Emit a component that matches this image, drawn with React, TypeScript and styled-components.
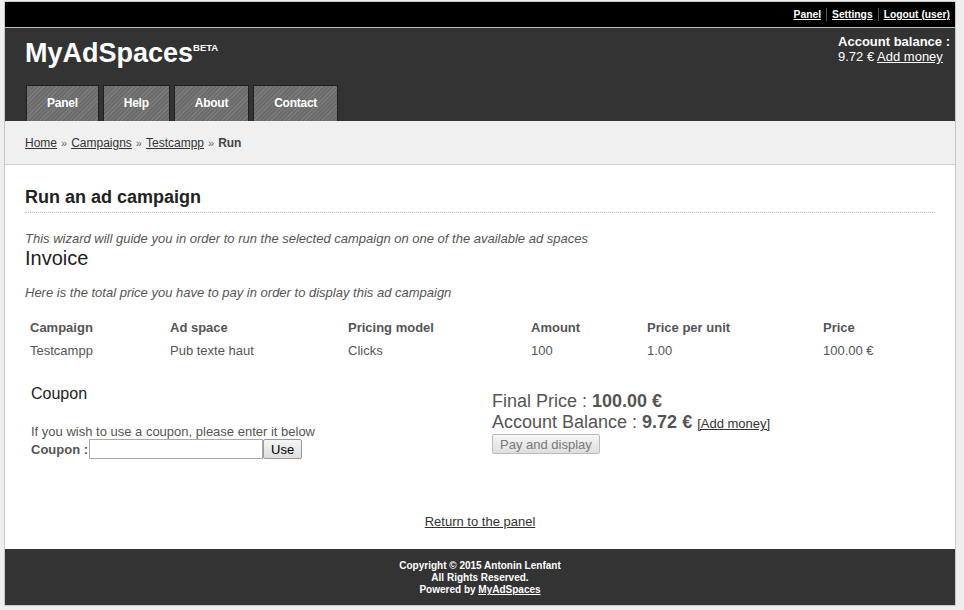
import React from "react";
import styled, { createGlobalStyle } from "styled-components";

const Global = createGlobalStyle`
  html, body { margin: 0; padding: 0; background: #eeeeee; }
  body { font-family: "Liberation Sans", Arial, sans-serif; color: #555; }
`;

const Page = styled.div`
  width: 950px;
  margin: 1px 0 0 4px;
  border: 1px solid #c8c8c8;
  background: #fff;
`;

const TopBar = styled.div`
  background: #000;
  height: 25px;
  border-bottom: 1px solid #bbb;
  display: flex;
  justify-content: flex-end;
  align-items: center;
  padding-right: 5px;
`;

const TopLink = styled.a`
  color: #fff;
  font-size: 10.3px;
  font-weight: bold;
  text-decoration: underline;
  padding: 0 5px;
  line-height: 13px;
  border-left: 1px solid #555;
  &:first-child { border-left: none; }
  &:last-child { padding-right: 0; }
`;

const Header = styled.div`
  background: #333;
  height: 93px;
  padding: 0 5px 0 20px;
  display: flex;
  flex-direction: column;
`;

const HeaderRow = styled.div`
  display: flex;
  justify-content: space-between;
  height: 57px;
`;

const Logo = styled.div`
  color: #fff;
  font-size: 27px;
  font-weight: bold;
  padding-top: 10px;
  sup {
    font-size: 9.5px;
    vertical-align: top;
    position: relative;
    top: 4px;
  }
`;

const Balance = styled.div`
  color: #fff;
  font-size: 13px;
  line-height: 15px;
  padding-top: 6px;
  b { font-weight: bold; }
  a { color: #fff; text-decoration: underline; }
`;

const Nav = styled.div`
  display: flex;
  gap: 4px;
  margin-top: auto;
  padding-left: 1px;
`;

const Tab = styled.a`
  display: flex;
  align-items: center;
  justify-content: center;
  padding: 0 20px 1px;
  box-sizing: border-box;
  height: 36px;
  border: 1px solid #1f1f1f;
  border-bottom: none;
  background: repeating-linear-gradient(135deg, #7b7b7b 0 1px, #6c6c6c 1px 3px);
  color: #fff;
  font-size: 12px;
  font-weight: bold;
  letter-spacing: -0.25px;
  text-decoration: none;
`;

const Crumbs = styled.div`
  background: #f0f0f0;
  border-bottom: 1px solid #cfcfcf;
  height: 43px;
  padding: 0 20px;
  display: flex;
  align-items: center;
  font-size: 12px;
  color: #333;
  a { color: #333; text-decoration: underline; }
  span.sep { color: #666; margin: 0 4px; font-size: 11px; }
  b { color: #444; }
`;

const Content = styled.div`
  padding: 22px 20px 0 20px;
`;

const Title = styled.h1`
  margin: 0;
  font-size: 18px;
  font-weight: bold;
  color: #222;
  padding-bottom: 4px;
  border-bottom: 1px dotted #bbb;
`;

const Intro = styled.p<{ $top: number }>`
  margin: ${(p) => p.$top}px 0 0 0;
  font-size: 13px;
  font-style: italic;
  color: #555;
  line-height: 15px;
`;

const SubTitle = styled.h2`
  margin: 0;
  font-size: 20px;
  font-weight: normal;
  color: #222;
  line-height: 24px;
`;

const Table = styled.table`
  margin-top: 16px;
  width: 100%;
  border-collapse: collapse;
  font-size: 13px;
  color: #555;
  th {
    text-align: left;
    font-weight: bold;
    padding: 5px 5px;
    line-height: 13px;
  }
  td {
    padding: 5px 5px;
    line-height: 13px;
  }
`;

const Split = styled.div`
  display: grid;
  grid-template-columns: 467px 1fr;
  margin-top: 23px;
`;

const CouponBox = styled.div`
  padding-left: 6px;
`;

const CouponTitle = styled.h3`
  margin: 0;
  font-size: 16px;
  font-weight: normal;
  color: #222;
  line-height: 18px;
`;

const CouponText = styled.div`
  margin-top: 21px;
  font-size: 13px;
  color: #555;
  line-height: 15px;
`;

const CouponRow = styled.div`
  display: flex;
  align-items: center;
  font-size: 13px;
  color: #555;
  label { font-weight: bold; margin-right: 1px; }
`;

const Input = styled.input`
  width: 168px;
  height: 16px;
  border: 1px solid #aaa;
  padding: 1px 2px;
  margin: 0;
  font-family: inherit;
`;

const Button = styled.button<{ $disabled?: boolean }>`
  font-family: inherit;
  font-size: 13px;
  height: 20px;
  padding: 0 7px;
  margin: 0;
  border: 1px solid ${(p) => (p.$disabled ? "#bbb" : "#999")};
  background: linear-gradient(#f6f6f6, #dedede);
  color: ${(p) => (p.$disabled ? "#777" : "#000")};
  border-radius: 2px;
`;

const PayButton = styled(Button)`
  display: block;
  margin-top: 0;
`;

const PriceBox = styled.div`
  padding-top: 6px;
  font-size: 18px;
  color: #555;
  line-height: 21px;
  b { font-weight: bold; }
  a { font-size: 13px; color: #333; text-decoration: underline; }
`;

const Return = styled.div`
  text-align: center;
  margin-top: 55px;
  padding-bottom: 20px;
  font-size: 13px;
  a { color: #333; text-decoration: underline; }
`;

const Footer = styled.div`
  background: #333;
  height: 56px;
  display: flex;
  flex-direction: column;
  align-items: center;
  justify-content: center;
  color: #fff;
  font-size: 10px;
  font-weight: bold;
  line-height: 12px;
  padding-top: 2px;
  box-sizing: border-box;
  a { color: #fff; text-decoration: underline; }
`;

const cols = [
  { c: "Campaign", w: 140 },
  { c: "Ad space", w: 178 },
  { c: "Pricing model", w: 183 },
  { c: "Amount", w: 116 },
  { c: "Price per unit", w: 176 },
  { c: "Price", w: 0 },
];
const data = ["Testcampp", "Pub texte haut", "Clicks", "100", "1.00", "100.00 €"];

export default function App() {
  return (
    <>
      <Global />
      <Page>
        <TopBar>
          <TopLink href="#">Panel</TopLink>
          <TopLink href="#">Settings</TopLink>
          <TopLink href="#">Logout (user)</TopLink>
        </TopBar>
        <Header>
          <HeaderRow>
            <Logo>
              MyAdSpaces<sup>BETA</sup>
            </Logo>
            <Balance>
              <b>Account balance :</b>
              <br />
              9.72 € <a href="#">Add money</a>
            </Balance>
          </HeaderRow>
          <Nav>
            <Tab href="#">Panel</Tab>
            <Tab href="#">Help</Tab>
            <Tab href="#">About</Tab>
            <Tab href="#">Contact</Tab>
          </Nav>
        </Header>
        <Crumbs>
          <a href="#">Home</a>
          <span className="sep">»</span>
          <a href="#">Campaigns</a>
          <span className="sep">»</span>
          <a href="#">Testcampp</a>
          <span className="sep">»</span>
          <b>Run</b>
        </Crumbs>
        <Content>
          <Title>Run an ad campaign</Title>
          <Intro $top={18}>This wizard will guide you in order to run the selected campaign on one of the available ad spaces</Intro>
          <SubTitle>Invoice</SubTitle>
          <Intro $top={15}>Here is the total price you have to pay in order to display this ad campaign</Intro>
          <Table>
            <thead>
              <tr>
                {cols.map((r) => (
                  <th key={r.c} style={r.w ? { width: r.w - 10 } : undefined}>
                    {r.c}
                  </th>
                ))}
              </tr>
            </thead>
            <tbody>
              <tr>
                {data.map((d) => (
                  <td key={d}>{d}</td>
                ))}
              </tr>
            </tbody>
          </Table>
          <Split>
            <CouponBox>
              <CouponTitle>Coupon</CouponTitle>
              <CouponText>If you wish to use a coupon, please enter it below</CouponText>
              <CouponRow>
                <label>Coupon :</label>
                <Input type="text" />
                <Button>Use</Button>
              </CouponRow>
            </CouponBox>
            <PriceBox>
              Final Price : <b>100.00 €</b>
              <br />
              Account Balance : <b>9.72 €</b> <a href="#">[Add money]</a>
              <PayButton $disabled disabled>
                Pay and display
              </PayButton>
            </PriceBox>
          </Split>
          <Return>
            <a href="#">Return to the panel</a>
          </Return>
        </Content>
        <Footer>
          <div>Copyright © 2015 Antonin Lenfant</div>
          <div>All Rights Reserved.</div>
          <div>
            Powered by <a href="#">MyAdSpaces</a>
          </div>
        </Footer>
      </Page>
    </>
  );
}
